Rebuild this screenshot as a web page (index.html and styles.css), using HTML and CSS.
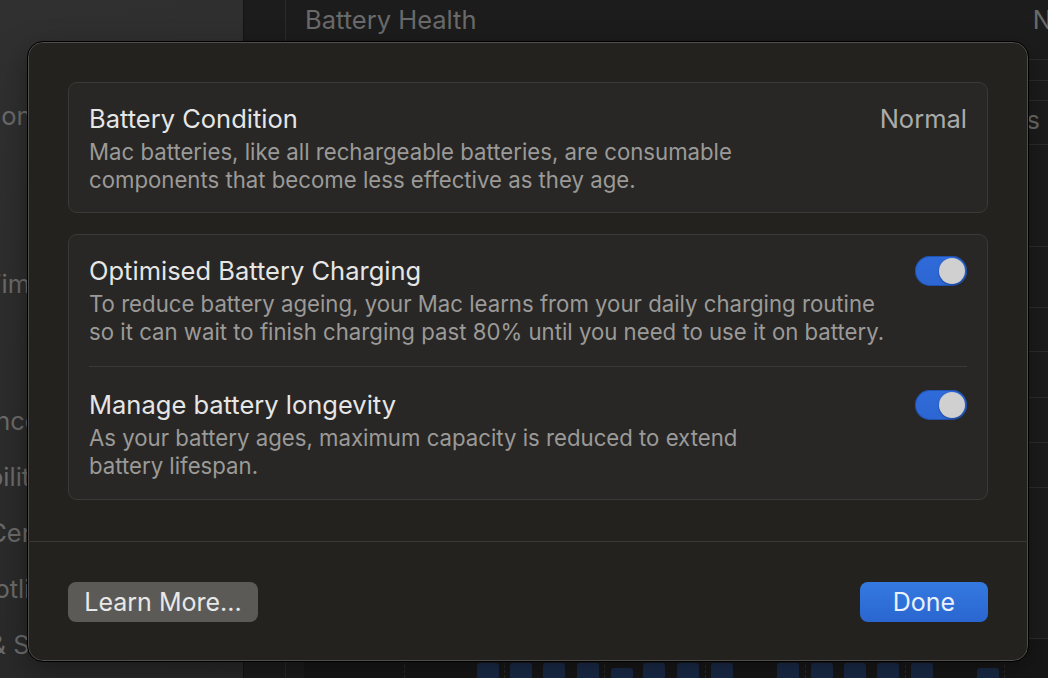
FILE: index.html
```html
<!DOCTYPE html>
<html lang="en">
<head>
<meta charset="utf-8">
<title>Battery Health</title>
<link rel="stylesheet" href="styles.css">
</head>
<body>
<div class="window">
  <aside class="sidebar">
    <ul class="nav">
      <li>Notifications</li>
      <li>Sound</li>
      <li>Focus</li>
      <li>Screen Time</li>
      <li class="section">General</li>
      <li>Appearance</li>
      <li>Accessibility</li>
      <li>Control Centre</li>
      <li>Siri &amp; Spotlight</li>
      <li>Privacy &amp; Security</li>
    </ul>
  </aside>
  <main class="pane">
    <div class="pane-list">
      <div class="prow r0"><span>Battery Health</span><span class="pval">Normal</span></div>
      <div class="prow r1"></div>
      <div class="prow r2"></div>
      <div class="prow r3"><span class="seg">Last 10 Days</span></div>
      <div class="prow r4"></div>
      <div class="prow r5"></div>
      <div class="prow r6"></div>
      <div class="prow r7"></div>
      <div class="prow r8"></div>
      <div class="prow r9"></div>
      <div class="prow r10"></div>
      <div class="chart">
        <div class="col"></div><div class="col"></div><div class="col"></div>
        <div class="col tick"></div><div class="col"></div><div class="col"><i class="bar"></i></div>
        <div class="col tick"><i class="bar"></i></div><div class="col"><i class="bar"></i></div><div class="col"><i class="bar"></i></div>
        <div class="col tick"><i class="bar low"></i></div><div class="col"><i class="bar"></i></div><div class="col"><i class="bar"></i></div>
        <div class="col tick"><i class="bar"></i></div><div class="col"></div><div class="col"><i class="bar"></i></div>
        <div class="col tick"><i class="bar"></i></div><div class="col"><i class="bar"></i></div><div class="col"><i class="bar"></i></div>
        <div class="col tick"><i class="bar"></i></div><div class="col"></div><div class="col last"><i class="bar low"></i></div>
      </div>
    </div>
  </main>
</div>

<div class="dialog">
  <section class="group cond">
    <div class="text">
      <div class="title">Battery Condition</div>
      <div class="desc">Mac batteries, like all rechargeable batteries, are consumable<br>components that become less effective as they age.</div>
    </div>
    <div class="value">Normal</div>
  </section>

  <section class="group opts">
    <div class="opt">
      <div class="text">
        <div class="title">Optimised Battery Charging</div>
        <div class="desc">To reduce battery ageing, your Mac learns from your daily charging routine<br>so it can wait to finish charging past 80% until you need to use it on battery.</div>
      </div>
      <div class="switch"><span class="knob"></span></div>
    </div>
    <div class="opt">
      <div class="text">
        <div class="title">Manage battery longevity</div>
        <div class="desc">As your battery ages, maximum capacity is reduced to extend<br>battery lifespan.</div>
      </div>
      <div class="switch"><span class="knob"></span></div>
    </div>
  </section>

  <footer class="footer">
    <button class="btn btn-secondary">Learn More...</button>
    <button class="btn btn-primary">Done</button>
  </footer>
</div>
</body>
</html>
```

FILE: styles.css
```css
* { box-sizing: border-box; }

body {
  margin: 0;
  width: 1048px;
  height: 678px;
  overflow: hidden;
  position: relative;
  background: #1c1c1c;
  font-family: Inter, "Noto Sans", sans-serif;
}

.window {
  display: flex;
  height: 678px;
}

/* ---------- sidebar (behind the sheet) ---------- */
.sidebar {
  width: 244px;
  flex: none;
  overflow: hidden;
  background: linear-gradient(170deg, #303030 0%, #2c2c2c 60%, #292929 100%);
  border-right: 1px solid #141414;
}

.nav {
  list-style: none;
  margin: 0 0 0 -107px;
  padding: 87px 0 0;
}

.nav li {
  height: 56px;
  display: flex;
  align-items: center;
  font-size: 25.5px;
  color: #6b6b6b;
  white-space: nowrap;
}

.nav li.section { margin-top: 25px; }

/* ---------- pane (behind the sheet) ---------- */
.pane {
  flex: 1;
  overflow: hidden;
  display: flex;
  padding-left: 41px;
  background: #1c1c1c;
}

.pane-list {
  width: 854px;
  flex: none;
  display: flex;
  flex-direction: column;
  border-left: 1px solid #2a2a2a;
}

.prow {
  flex: none;
  display: flex;
  align-items: flex-start;
  justify-content: space-between;
  padding: 0 19px;
  border-bottom: 1px solid #2d2d2d;
  font-size: 25.5px;
  line-height: 32px;
  color: #6a6a6a;
}

.r0 { height: 60px; padding-top: 4px; }
.r1 { height: 21px; }
.r2 { height: 20px; }
.r3 { height: 44px; padding-top: 3px; justify-content: flex-end; }
.r4 { height: 102px; }
.r5 { height: 61px; }
.r6 { height: 44px; }
.r7 { height: 46px; }
.r8 { height: 45px; }
.r9 { height: 45px; }
.r10 { height: 151px; }

.seg { margin-right: 80px; }

.chart {
  flex: 1;
  display: grid;
  grid-template-columns: repeat(21, 33.38px);
  margin-left: 18px;
  background: #171717;
}

.col {
  display: flex;
  align-items: flex-end;
  justify-content: center;
}

.col.tick { border-left: 1px dashed #2c2c2c; }
.col.last { border-right: 1px dashed #2c2c2c; }

.bar {
  display: block;
  width: 22px;
  height: 15px;
  background: #1a2b49;
  border-radius: 3px 3px 0 0;
}

.bar.low { height: 10px; }

/* ---------- sheet ---------- */
.dialog {
  position: absolute;
  left: 27px;
  top: 41px;
  width: 1002px;
  height: 621px;
  border: 1px solid #000;
  border-radius: 16px;
  background: #23221f;
  box-shadow: inset 0 0 0 1px #4f4e4c, 0 10px 30px rgba(0, 0, 0, 0.35);
  padding: 40px 40px 0;
  display: flex;
  flex-direction: column;
  color: #e6e6e6;
}

.group {
  background: #282725;
  border: 1px solid #3b3a38;
  border-radius: 9px;
}

.title {
  font-size: 25.5px;
  line-height: 32px;
  color: #e6e6e6;
}

.desc {
  margin-top: 3px;
  font-size: 22.2px;
  line-height: 28px;
  color: #9b9a98;
}

.cond {
  display: flex;
  justify-content: space-between;
  align-items: flex-start;
  padding: 20px 20px 18px;
}

.value {
  font-size: 25.5px;
  line-height: 32px;
  color: #ababab;
}

.opts {
  margin-top: 21px;
  padding: 0 20px;
}

.opt {
  display: flex;
  justify-content: space-between;
  align-items: flex-start;
  padding: 20px 0 20px;
}

.opt + .opt {
  border-top: 1px solid #3a3937;
  padding: 22px 0 19px;
}

.switch {
  flex: none;
  width: 52px;
  height: 30px;
  margin-top: 1px;
  border-radius: 15px;
  background: linear-gradient(#2f6bd9, #2c66d2);
  box-shadow: inset 0 0 0 1px rgba(20, 60, 140, 0.5);
  display: flex;
  align-items: center;
  justify-content: flex-end;
  padding: 0 2px;
}

.knob {
  width: 26px;
  height: 26px;
  border-radius: 50%;
  background: #d0d0d0;
  box-shadow: 0 1px 2px rgba(0, 0, 0, 0.3);
}

.footer {
  margin: 41px -40px 0;
  border-top: 1px solid #3a3936;
  padding: 40px 40px 39px;
  display: flex;
  justify-content: space-between;
}

.btn {
  height: 40px;
  border: none;
  border-radius: 8px;
  font-family: inherit;
  font-size: 25px;
  padding: 0;
}

.btn-secondary {
  width: 190px;
  background: #5b5a57;
  color: #e8e8e8;
}

.btn-primary {
  width: 128px;
  background: linear-gradient(#3479e1, #2a66cf);
  color: #eaf1fd;
}
```
